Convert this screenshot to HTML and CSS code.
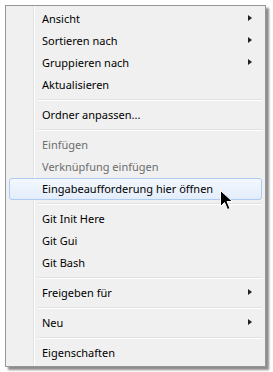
FILE: index.html
```html
<!DOCTYPE html>
<html lang="de">
<head>
    <meta charset="UTF-8">
    <title>Kontextmenü</title>
    <link rel="stylesheet" href="styles.css">
</head>
<body>
    <div class="menu">
        <div class="item sub">Ansicht</div>
        <div class="item sub">Sortieren nach</div>
        <div class="item sub">Gruppieren nach</div>
        <div class="item">Aktualisieren</div>
        <div class="sep"></div>
        <div class="item">Ordner anpassen...</div>
        <div class="sep"></div>
        <div class="item disabled">Einfügen</div>
        <div class="item disabled">Verknüpfung einfügen</div>
        <div class="item hover">Eingabeaufforderung hier öffnen
            <svg class="cursor" width="13" height="21" viewBox="0 0 13 21">
                <path d="M0.5 0.5 L0.5 16.5 L4.5 12.5 L7.5 19.5 L10 18.5 L7 11.5 L12.5 11.5 Z" fill="#000" stroke="#fff" stroke-width="1"/>
            </svg>
        </div>
        <div class="sep"></div>
        <div class="item">Git Init Here</div>
        <div class="item">Git Gui</div>
        <div class="item">Git Bash</div>
        <div class="sep"></div>
        <div class="item sub">Freigeben für</div>
        <div class="sep"></div>
        <div class="item sub">Neu</div>
        <div class="sep"></div>
        <div class="item">Eigenschaften</div>
    </div>
</body>
</html>
```

FILE: styles.css
```css
body {
    margin: 0;
    padding: 5px;
    background: #fff;
    font-family: "Noto Sans", "DejaVu Sans", sans-serif;
    font-size: 11px;
}
.menu {
    border: 1px solid #979797;
    padding: 2px;
    box-sizing: border-box;
    width: 261px;
    background: linear-gradient(to right, #f0f0f0 27px, #e2e3e3 27px 28px, #fff 28px 29px, #f0f0f0 29px);
    box-shadow: 3px 3px 2px rgba(0, 0, 0, 0.45);
    display: flex;
    flex-direction: column;
}
.item {
    position: relative;
    height: 22px;
    line-height: 20px;
    padding-left: 32px;
    color: #000;
    border: 1px solid transparent;
    border-radius: 3px;
    margin: 0 1px;
    box-sizing: border-box;
}
.item.sub::after {
    content: "";
    position: absolute;
    right: 9px;
    top: 6px;
    border-left: 4px solid #222;
    border-top: 3.5px solid transparent;
    border-bottom: 3.5px solid transparent;
}
.disabled {
    color: #6d6d6d;
}
.hover {
    border-color: #aeccf1;
    background: linear-gradient(#f3f8fd, #e3edfb);
}
.sep {
    height: 0;
    margin: 3px 1px 3px 30px;
    border-top: 1px solid #e0e0e0;
    border-bottom: 1px solid #fff;
}
.cursor {
    position: absolute;
    left: 210px;
    top: 11px;
}
```
